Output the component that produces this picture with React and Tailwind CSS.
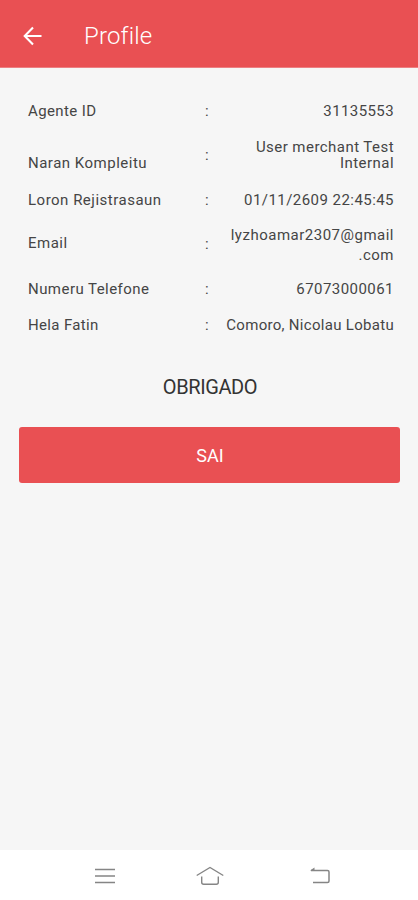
const rows = [
  { label: "Agente ID", labelStyle: "tracking-[0.4px]", value: "31135553", valueStyle: "tracking-[0.4px]" },
  {
    label: "Naran Kompleitu",
    labelStyle: "tracking-[0.5px] pt-4",
    value: "User merchant Test\nInternal",
    valueStyle: "tracking-[0.45px] leading-4 -mt-0.5",
    height: "h-[53px]",
  },
  { label: "Loron Rejistrasaun", labelStyle: "tracking-[0.5px]", value: "01/11/2609 22:45:45", valueStyle: "tracking-[0.45px]" },
  {
    label: "Email",
    labelStyle: "tracking-[0.5px] pb-0.5",
    value: "lyzhoamar2307@gmail\n.com",
    valueStyle: "tracking-[0.5px] leading-5",
    height: "h-[53px]",
  },
  { label: "Numeru Telefone", labelStyle: "tracking-[0.45px]", value: "67073000061", valueStyle: "tracking-[0.45px]" },
  { label: "Hela Fatin", labelStyle: "tracking-[0.35px]", value: "Comoro, Nicolau Lobatu", valueStyle: "tracking-[0.3px]" },
];

function ProfileRow({ label, labelStyle, value, valueStyle, height = "h-9" }) {
  return (
    <div className={`flex items-center ${height}`}>
      <span className={`w-[177px] ${labelStyle}`}>{label}</span>
      <span className="w-3">:</span>
      <span className={`flex-1 text-right whitespace-pre ${valueStyle}`}>{value}</span>
    </div>
  );
}

function NavBar() {
  return (
    <nav className="h-[50px] bg-white flex items-center pt-0.5 pl-[95px] text-[#858585]">
      <svg width="20" height="18" viewBox="0 0 20 18" fill="none" stroke="currentColor" strokeWidth="1.5">
        <path d="M0 2.5h20M0 9h20M0 15.5h20" />
      </svg>
      <svg width="28" height="20" viewBox="0 0 28 20" fill="none" stroke="currentColor" strokeWidth="1.4" className="ml-[81px]">
        <path d="M.7 9.5 14 1.5l13.3 8" />
        <path d="M5.7 10.5v5.8q0 2 2 2h12.6q2 0 2-2v-5.8" />
      </svg>
      <svg width="20" height="18" viewBox="0 0 20 18" fill="none" stroke="currentColor" strokeWidth="1.5" className="ml-[86px]">
        <path d="M1 3.5h16.5q1.5 0 1.5 1.5v9q0 1.5-1.5 1.5H3" />
        <path d="M0 3.5 4.5.5v3z" fill="currentColor" stroke="none" />
      </svg>
    </nav>
  );
}

export default function App() {
  return (
    <div className="w-full h-screen flex flex-col bg-[#f6f6f6] font-['Roboto',sans-serif] text-[#454545]">
      <header className="h-[68px] bg-[#e95053] border-b border-[#ec7f82] flex items-center pt-1 pl-[23px] text-white">
        <svg width="19" height="20" viewBox="0 0 19 20" fill="none" stroke="currentColor" strokeWidth="2.1">
          <path d="M18.5 10H2M10 1.5 1.7 10l8.3 8.5" />
        </svg>
        <h1 className="ml-[42px] pt-px text-2xl font-light tracking-[0.15px]">Profile</h1>
      </header>

      <main className="flex-1 pt-[25px]">
        <div className="pl-7 pr-6 text-[15px]">
          {rows.map((row) => (
            <ProfileRow key={row.label} {...row} />
          ))}
        </div>

        <p className="mt-[30px] text-center text-xl leading-7 tracking-[-0.4px] text-[#333] pl-0.5">OBRIGADO</p>

        <div className="mt-[26px] pl-[19px] pr-[18px]">
          <button className="w-full h-14 rounded-[3px] bg-[#e95053] text-lg text-white pt-px pl-px">SAI</button>
        </div>
      </main>

      <NavBar />
    </div>
  );
}
